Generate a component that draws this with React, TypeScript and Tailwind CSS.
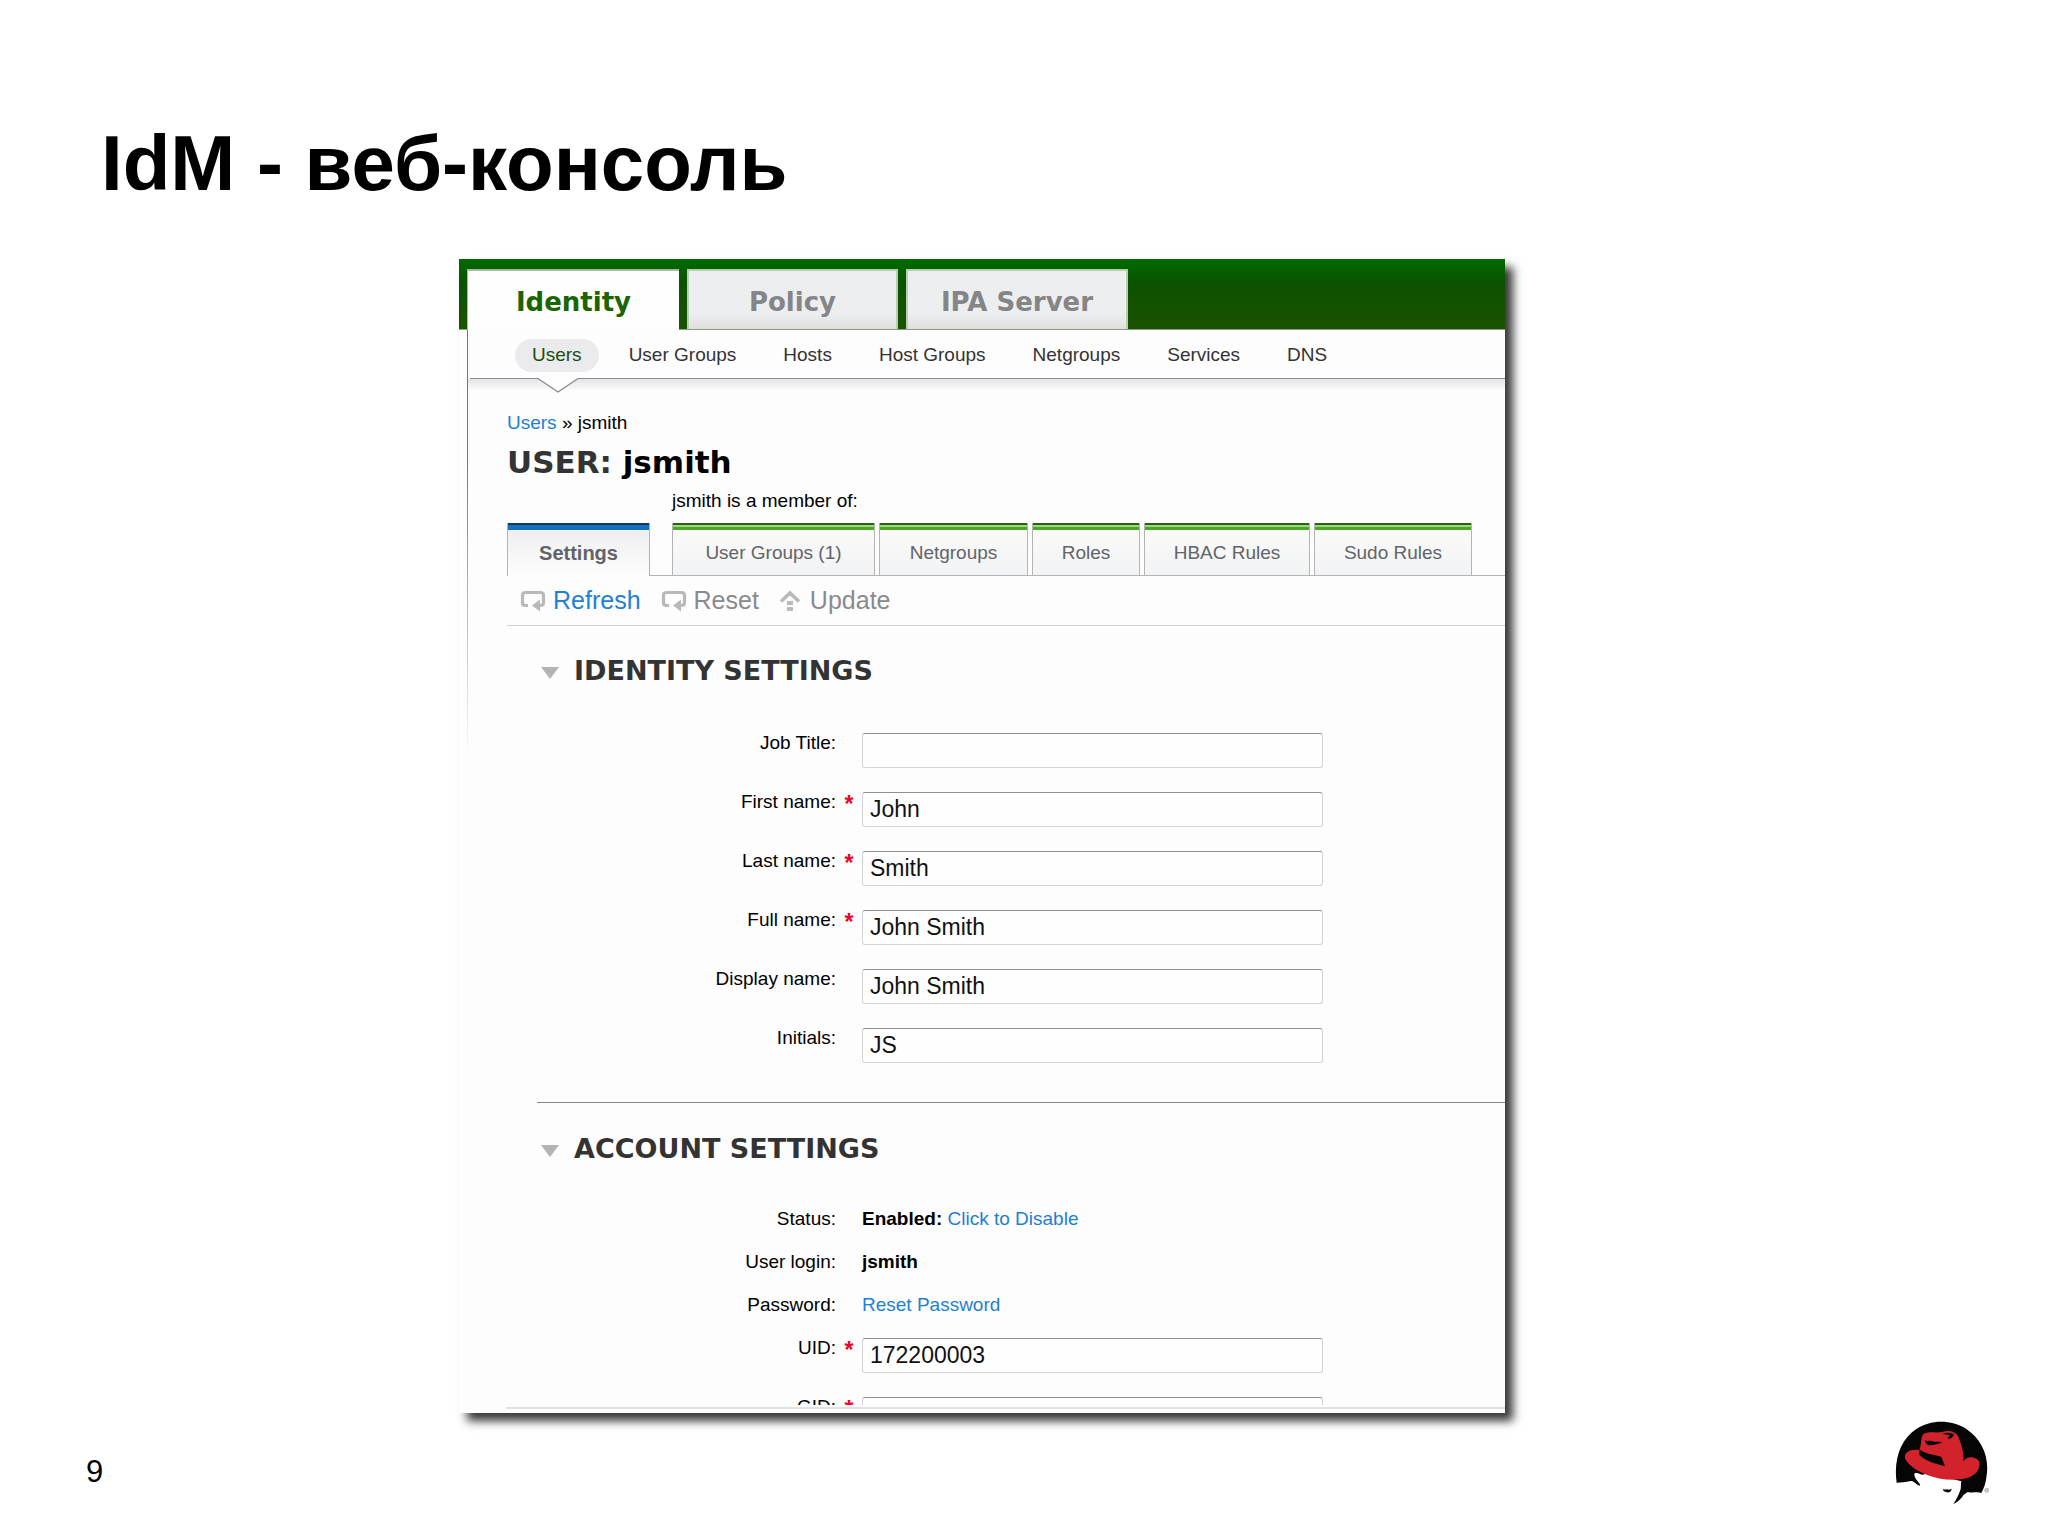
import { useId, type ReactNode } from "react";

const primaryTabs = [
  { name: "Policy", width: "w-[211px]" },
  { name: "IPA Server", width: "w-[222px]" },
];

const subNav = ["User Groups", "Hosts", "Host Groups", "Netgroups", "Services", "DNS"];

const facets = [
  { name: "User Groups (1)", width: "w-[203px]" },
  { name: "Netgroups", width: "w-[149px]" },
  { name: "Roles", width: "w-[108px]" },
  { name: "HBAC Rules", width: "w-[166px]" },
  { name: "Sudo Rules", width: "w-[158px]" },
];

const identityFields = [
  { label: "Job Title:", value: "", required: false },
  { label: "First name:", value: "John", required: true },
  { label: "Last name:", value: "Smith", required: true },
  { label: "Full name:", value: "John Smith", required: true },
  { label: "Display name:", value: "John Smith", required: false },
  { label: "Initials:", value: "JS", required: false },
];

const rowGrid = "grid grid-cols-[minmax(0,368px)_26px_minmax(0,461px)]";

function ReturnIcon() {
  return (
    <svg width="26" height="22" viewBox="0 0 26 22" fill="none" stroke="#b9b9b9" strokeWidth="3.200">
      <path d="M8 15.500H5.500Q2.500 15.500 2.500 12.500V5.500Q2.500 2.500 5.500 2.500H20.500Q23.500 2.500 23.500 5.500V12.500Q23.500 15.500 20.500 15.500H17" />
      <path d="M20 9.500V21.500L12 15.500Z" fill="#b9b9b9" stroke="none" />
    </svg>
  );
}

function UpdateIcon() {
  return (
    <svg width="22" height="22" viewBox="0 0 22 22" fill="none">
      <path d="M2 11.500L11 3L20 11.500" stroke="#b9b9b9" strokeWidth="3.500" />
      <path d="M11 1L14 6H8Z" fill="#b9b9b9" />
      <rect x="8" y="11" width="6" height="4" fill="#b9b9b9" />
      <rect x="8" y="17" width="6" height="4" rx="1" fill="#b9b9b9" />
    </svg>
  );
}

function HatLogo() {
  return (
    <svg width="97" height="87" viewBox="42 30 291 261" role="img" aria-label="Red Hat">
      <path
        d="M50 218C40 150 62 88 108 58C150 28 214 28 258 56C306 88 328 140 320 196C318 218 312 236 304 249C292 244 276 250 264 246C256 250 250 254 246 262C238 272 228 280 220 282C228 270 236 256 238 246L244 214L150 190L118 196C104 192 104 202 112 212C118 218 122 224 119 227C108 224 102 212 92 213C76 216 64 218 50 218Z"
        fill="#050505"
      />
      <path
        d="M104 190C112 186 122 194 132 198L136 206C146 196 160 206 172 214C186 220 194 214 204 219C216 212 228 222 243 216L242 238C234 260 222 272 216 284L196 286L160 250L122 228C122 218 98 204 104 190Z"
        fill="#fff"
      />
      <path d="M190 236C196 242 202 234 207 240C212 236 214 240 216 234C214 246 206 250 198 246C192 244 188 242 190 236Z" fill="#050505" />
      <path
        d="M128 74C144 62 166 70 186 66C204 60 226 64 234 78C244 102 250 122 252 150C260 138 290 138 298 156C302 176 288 196 262 204C222 214 174 208 140 194C108 182 80 162 75 144C72 126 92 116 118 120C124 106 122 88 128 74Z"
        fill="#d2232c"
      />
      <path d="M118 118C134 132 160 134 184 140L195 168C168 162 134 152 118 134Z" fill="#050505" />
      <path d="M134 90C142 96 148 90 158 94C168 98 178 92 186 98C172 100 162 106 152 106C144 108 136 100 134 90Z" fill="#050505" />
      <path d="M188 72C200 66 214 68 222 74C218 82 210 90 202 84L210 77C204 73 196 76 188 72Z" fill="#050505" />
      <path d="M252 138L262 142L249 154Z" fill="#050505" />
      <circle cx="320" cy="241" r="6" fill="#ccc" stroke="#999" strokeWidth="2" />
    </svg>
  );
}

function SectionHeading({ children }: { children: ReactNode }) {
  return (
    <h3 className="flex items-center pl-[72px] text-[27px] leading-7 font-bold text-[#333]">
      <button type="button" aria-label="Collapse section" className="mt-1 mr-[14px]">
        <svg width="20" height="12" viewBox="0 0 20 12">
          <path d="M1 0H19L10 12Z" fill="#b3b3b6" />
        </svg>
      </button>
      <span className="font-['DejaVu_Sans',sans-serif]">{children}</span>
    </h3>
  );
}

function Field({ label, value, required }: { label: string; value: string; required: boolean }) {
  const id = useId();
  return (
    <div className={rowGrid}>
      <label htmlFor={id} className="h-5 text-right leading-5">
        {label}
      </label>
      <span aria-hidden="true" className="text-center text-[23px] leading-6 font-bold text-[#f5001d]">
        {required ? "*" : ""}
      </span>
      <input
        id={id}
        type="text"
        defaultValue={value}
        required={required}
        className="h-[35px] w-full rounded-[3px] border border-[#d3d3d9] border-t-[#8f8f96] bg-[#fefefe] px-[7px] text-[23px] text-[#111]"
      />
    </div>
  );
}

function StaticRow({ label, children }: { label: string; children: ReactNode }) {
  return (
    <div className={rowGrid}>
      <div className="text-right leading-5">{label}</div>
      <div className="col-start-3 leading-5">{children}</div>
    </div>
  );
}

export default function App() {
  return (
    <div className="flex min-h-screen flex-col bg-white font-['Liberation_Sans',Arial,sans-serif] text-[19px] text-black">
      <h1 className="pt-[118px] pl-[101px] text-[78px] leading-[90px] font-bold">IdM - веб-консоль</h1>

      <div className="mt-[51px] grid grid-cols-[459fr_1046fr_543fr]">
        <main className="col-start-2 bg-[#fdfdfe] shadow-[8px_8px_9px_rgba(0,0,0,0.78)]">
          <nav
            aria-label="Primary"
            className="flex gap-2 border-b border-[#8d9a8a] bg-[linear-gradient(#006b00,#0b5200_35%,#1a5200)] pt-[10px] pl-2 font-['DejaVu_Sans',sans-serif] text-[26px] leading-7 font-bold"
          >
            <a
              href="#identity"
              className="relative z-10 -mb-px flex h-[61px] w-[212px] items-center justify-center border-t-2 border-l border-[#a9b8a4] bg-[#fefefe] pt-0.5 text-[#1b6400]"
            >
              Identity
            </a>
            {primaryTabs.map((tab) => (
              <a
                key={tab.name}
                href={"#" + tab.name}
                className={
                  "flex h-[60px] items-center justify-center border-t-2 border-r-2 border-l-2 border-[#b9cdb3] bg-[linear-gradient(#eceeef_75%,#dfdfdf)] pt-[3px] text-[#858588] " +
                  tab.width
                }
              >
                {tab.name}
              </a>
            ))}
          </nav>

          <div className="ml-2 bg-[linear-gradient(#77777c_30%,transparent)] bg-[length:1px_430px] bg-no-repeat pl-px">
            <nav
              aria-label="Identity"
              className="ml-0.5 flex h-[49px] items-center gap-[13px] border-b border-[#8b8b8f] pt-[3px] pl-[45px] text-[#333]"
            >
              <a href="#users" className="relative flex h-[33px] items-center rounded-full bg-[#ebebed] px-[17px] text-[#1b4d10]">
                Users
                <svg className="absolute top-[38px] left-[22px]" width="42" height="16" viewBox="0 0 42 16">
                  <path d="M1 0H41V1.500L21 15L1 1.500Z" fill="#fefefe" />
                  <path d="M1 1.500L21 15L41 1.500" fill="none" stroke="#8b8b8f" strokeWidth="1.300" />
                </svg>
              </a>
              {subNav.map((item) => (
                <a key={item} href={"#" + item} className="px-[17px]">
                  {item}
                </a>
              ))}
            </nav>

            <div className="bg-[linear-gradient(#e4e4e6,transparent)] bg-[length:100%_12px] bg-no-repeat pt-[34px]">
              <div className="pl-[39px]">
                <div className="leading-5">
                  <a href="#users" className="text-[#1e80d0]">
                    Users
                  </a>{" "}
                  » jsmith
                </div>
                <h2 className="mt-[11px] font-['DejaVu_Sans',sans-serif] text-[31px] leading-9 font-bold">
                  <span className="text-[#333]">USER:</span> jsmith
                </h2>
                <div className="mt-[11px] pl-[165px] leading-5">jsmith is a member of:</div>

                <div role="tablist" className="mt-3 flex h-[53px] gap-1 border-b border-[#b4b4b6] text-[#626468]">
                  <button
                    type="button"
                    role="tab"
                    aria-selected="true"
                    className="mr-[18px] -mb-px flex w-[143px] flex-col border-x border-[#b4b4b6] bg-[linear-gradient(#ededef,#fdfdfe)] text-[20px] font-bold"
                  >
                    <span className="h-[7px] w-full border-t-2 border-[#0f3a66] bg-[#1670c0]" />
                    <span className="flex w-full flex-1 items-center justify-center">Settings</span>
                  </button>
                  {facets.map((facet) => (
                    <button
                      key={facet.name}
                      type="button"
                      role="tab"
                      aria-selected="false"
                      className={"flex flex-col border-x border-[#b4b4b6] bg-[linear-gradient(#fbfbf9,#f2f3f4)] " + facet.width}
                    >
                      <span className="h-[7px] w-full border-t-2 border-[#2b6410] bg-[linear-gradient(#9bd97f_30%,#4da52a_50%)]" />
                      <span className="flex w-full flex-1 items-center justify-center pt-0.5">{facet.name}</span>
                    </button>
                  ))}
                </div>

                <div className="flex h-[50px] items-center gap-[20px] border-b border-[#d0d0d3] pl-[13px] text-[25px] text-[#8a8a8e]">
                  <button type="button" className="flex items-center gap-[7px] text-[#1e80d8]">
                    <ReturnIcon />
                    Refresh
                  </button>
                  <button type="button" className="flex items-center gap-[7px]">
                    <ReturnIcon />
                    Reset
                  </button>
                  <button type="button" className="flex items-center gap-[9px]">
                    <UpdateIcon />
                    Update
                  </button>
                </div>
              </div>

              <section className="mt-[31px]">
                <SectionHeading>IDENTITY SETTINGS</SectionHeading>
                <div className="mt-12 flex flex-col gap-6">
                  {identityFields.map((field) => (
                    <Field key={field.label} {...field} />
                  ))}
                </div>
              </section>

              <hr className="mt-[39px] ml-[69px] border-[#85858a]" />

              <section className="mt-8">
                <SectionHeading>ACCOUNT SETTINGS</SectionHeading>
                <div className="mt-[46px] flex flex-col gap-[23px]">
                  <StaticRow label="Status:">
                    <b>Enabled:</b>{" "}
                    <a href="#disable" className="text-[#1e80d0]">
                      Click to Disable
                    </a>
                  </StaticRow>
                  <StaticRow label="User login:">
                    <b>jsmith</b>
                  </StaticRow>
                  <StaticRow label="Password:">
                    <a href="#reset-password" className="text-[#1e80d0]">
                      Reset Password
                    </a>
                  </StaticRow>
                  <Field label="UID:" value="172200003" required />
                </div>
                <div className="mt-6 h-2 overflow-hidden">
                  <Field label="GID:" value="" required />
                </div>
              </section>
              <div className="mt-0.5 ml-[38px] h-[6px] border-t-2 border-[#e2e2e5]" />
            </div>
          </div>
        </main>
      </div>

      <footer className="mt-[7px] flex items-end justify-between pr-[57px] pl-[86px]">
        <span className="pb-[15px] text-[31px] leading-10">9</span>
        <HatLogo />
      </footer>
    </div>
  );
}
